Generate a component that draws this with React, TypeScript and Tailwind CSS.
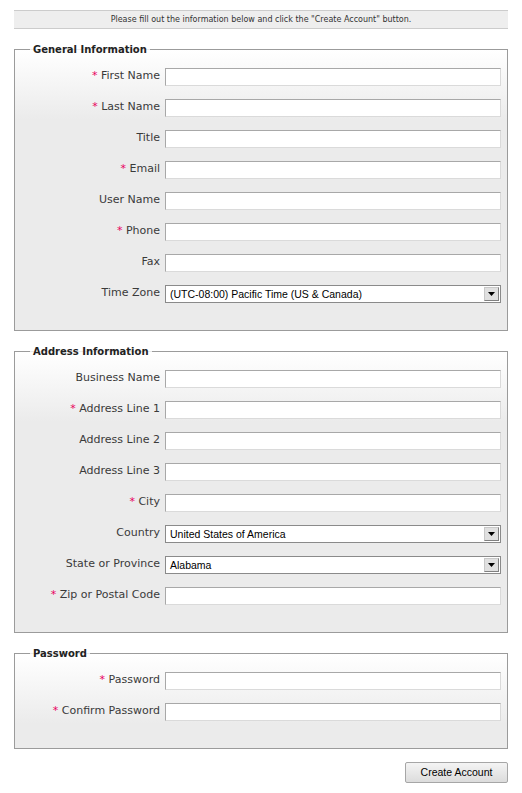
import React from "react";

type Field = { label: string; req?: boolean; select?: string };

const general: Field[] = [
  { label: "First Name", req: true },
  { label: "Last Name", req: true },
  { label: "Title" },
  { label: "Email", req: true },
  { label: "User Name" },
  { label: "Phone", req: true },
  { label: "Fax" },
  { label: "Time Zone", select: "(UTC-08:00) Pacific Time (US & Canada)" },
];

const address: Field[] = [
  { label: "Business Name" },
  { label: "Address Line 1", req: true },
  { label: "Address Line 2" },
  { label: "Address Line 3" },
  { label: "City", req: true },
  { label: "Country", select: "United States of America" },
  { label: "State or Province", select: "Alabama" },
  { label: "Zip or Postal Code", req: true },
];

const password: Field[] = [
  { label: "Password", req: true },
  { label: "Confirm Password", req: true },
];

function Row({ f }: { f: Field }) {
  return (
    <div className="flex items-start h-[18px]">
      <div className="w-[150px] pr-[5px] text-right text-[11px] leading-[14px] pt-[1px] text-[#3a3a3a] font-['DejaVu_Sans',sans-serif] whitespace-nowrap">
        {f.req && <span className="text-[#e8005c]">*</span>}
        {f.req && " "}
        {f.label}
      </div>
      {f.select ? (
        <div className="w-[336px] h-[18px] border border-[#8a8a8a] bg-white flex items-center">
          <span className="flex-1 pl-[4px] text-[10.5px] leading-[14px] text-black font-['Liberation_Sans',Arial,sans-serif] whitespace-nowrap">
            {f.select}
          </span>
          <span className="w-[15px] h-[14px] mr-[1px] bg-[#e0e0e0] border border-t-[#c8c8c8] border-l-[#c8c8c8] border-b-[#808080] border-r-[#808080] flex items-center justify-center">
            <svg width="7" height="4" viewBox="0 0 7 4">
              <path d="M0 0h7L3.5 4z" fill="#000" />
            </svg>
          </span>
        </div>
      ) : (
        <div className="w-[336px] h-[18px] bg-white border border-t-[#a8a8a8] border-l-[#a8a8a8] border-b-[#dadada] border-r-[#dadada]" />
      )}
    </div>
  );
}

function Section({ title, fields }: { title: string; fields: Field[] }) {
  return (
    <fieldset className="border border-[#9b9b9b] bg-gradient-to-b from-white to-[#ebebeb] bg-[length:100%_70px] bg-no-repeat bg-[#ebebeb] pt-[12px] pb-[27px]">
      <legend className="ml-[15px] px-[3px] text-[10px] leading-[13px] font-bold text-[#222] font-['DejaVu_Sans',sans-serif]">
        {title}
      </legend>
      <div className="flex flex-col gap-[13px]">
        {fields.map((f) => (
          <Row key={f.label} f={f} />
        ))}
      </div>
    </fieldset>
  );
}

export default function App() {
  return (
    <div className="w-[522px] min-h-[793px] bg-white px-[14px] pt-[10px]">
      <div className="h-[19px] bg-[#eeeeee] border-y border-[#cccccc] flex items-center justify-center text-[8px] text-[#333] font-['DejaVu_Sans',sans-serif] whitespace-nowrap">
        Please fill out the information below and click the "Create Account" button.
      </div>
      <div className="mt-[14px] flex flex-col gap-[14px]">
        <Section title="General Information" fields={general} />
        <Section title="Address Information" fields={address} />
        <Section title="Password" fields={password} />
      </div>
      <div className="flex justify-end mt-[13px]">
        <button className="w-[103px] h-[21px] border border-[#a6a6a6] rounded-[2px] bg-gradient-to-b from-[#f4f4f4] to-[#dcdcdc] text-[10.5px] text-black font-['Liberation_Sans',Arial,sans-serif]">
          Create Account
        </button>
      </div>
    </div>
  );
}
